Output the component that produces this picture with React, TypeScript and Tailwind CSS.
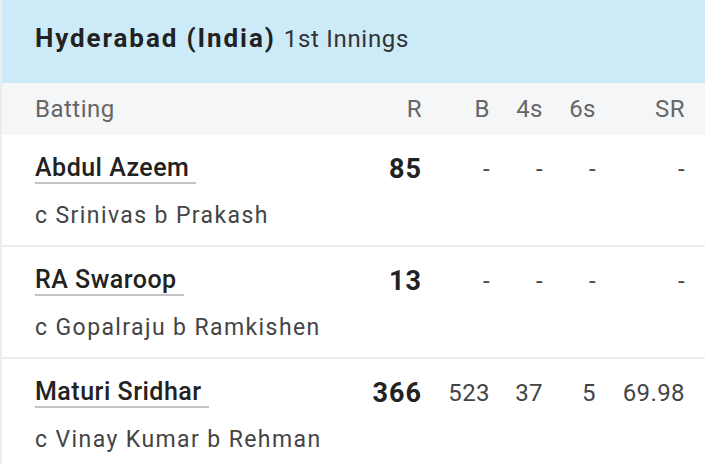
import React from "react"

interface Batter {
  name: string
  dismissal: string
  runs: string
  balls: string
  fours: string
  sixes: string
  sr: string
}

const batters: Batter[] = [
  { name: "Abdul Azeem", dismissal: "c Srinivas b Prakash", runs: "85", balls: "-", fours: "-", sixes: "-", sr: "-" },
  { name: "RA Swaroop", dismissal: "c Gopalraju b Ramkishen", runs: "13", balls: "-", fours: "-", sixes: "-", sr: "-" },
  { name: "Maturi Sridhar", dismissal: "c Vinay Kumar b Rehman", runs: "366", balls: "523", fours: "37", sixes: "5", sr: "69.98" },
]

export default function App() {
  return (
    <div className="w-[705px] h-[464px] overflow-hidden bg-white border-l-2 border-[#ececec] font-['Roboto',sans-serif]">
      {/* Innings title */}
      <div className="h-[83px] bg-[#cdeaf9] flex items-center pl-[33px] pb-[6px]">
        <span className="text-[26px] font-bold text-[#222] tracking-[1.9px]">Hyderabad (India)</span>
        <span className="text-[24px] text-[#333] ml-[8px] tracking-[0.7px]">1st Innings</span>
      </div>

      {/* Column headings */}
      <div className="h-[52px] bg-[#f5f6f7] flex items-center pl-[33px] pr-[20px] text-[24px] text-[#666] tracking-[0.5px]">
        <div className="flex-1">Batting</div>
        <div className="w-[80px] text-right">R</div>
        <div className="w-[68px] text-right">B</div>
        <div className="w-[53px] text-right">4s</div>
        <div className="w-[53px] text-right">6s</div>
        <div className="w-[89px] text-right">SR</div>
      </div>

      {batters.map((b, i) => (
        <div key={b.name} className={`pl-[33px] pr-[20px] pt-[18px] h-[112px] ${i < batters.length - 1 ? "border-b-2 border-[#ededed]" : ""}`}>
          <div className="flex items-center h-[32px]">
            <div className="flex-1">
              <span className="inline-block text-[25px] font-medium text-[#222] leading-[28px] tracking-[0.5px] border-b-2 border-[#c4c4c4] pr-[7px]">
                {b.name}
              </span>
            </div>
            <div className="w-[80px] text-right text-[27px] font-bold text-[#222] tracking-[1px]">{b.runs}</div>
            <div className="w-[68px] text-right text-[24px] text-[#444] tracking-[0.4px]">{b.balls}</div>
            <div className="w-[53px] text-right text-[24px] text-[#444] tracking-[0.4px]">{b.fours}</div>
            <div className="w-[53px] text-right text-[24px] text-[#444] tracking-[0.4px]">{b.sixes}</div>
            <div className="w-[89px] text-right text-[24px] text-[#444] tracking-[0.4px]">{b.sr}</div>
          </div>
          <div className="mt-[14px] text-[23px] text-[#444] tracking-[1.4px]">{b.dismissal}</div>
        </div>
      ))}
    </div>
  )
}
